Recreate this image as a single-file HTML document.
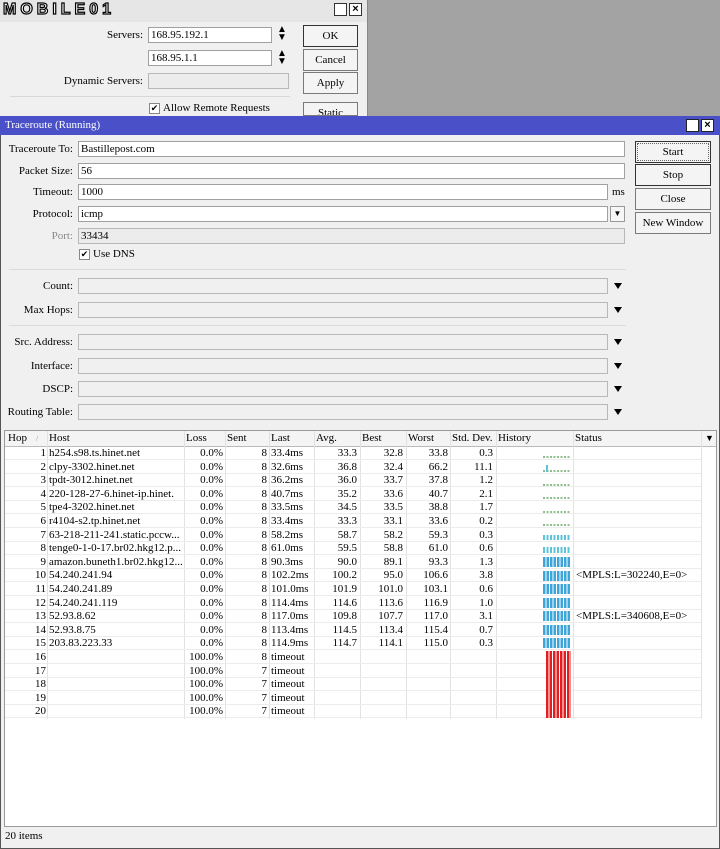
<!DOCTYPE html>
<html><head><meta charset="utf-8"><style>
*{margin:0;padding:0;box-sizing:border-box}
body{width:720px;height:849px;overflow:hidden;background:#a3a3a3;font-family:"Liberation Serif","Noto Serif CJK SC",serif;font-size:11px;color:#000;position:relative}
.a{position:absolute;white-space:nowrap}
.win1{left:0;top:0;width:368px;height:116px;background:#f0f0f0;border-right:1px solid #888}
.inp{position:absolute;height:16px;background:#fff;border:1px solid #a0a0a0;padding-left:2px;line-height:14px}
.dis{background:#ececec;border-color:#b8b8b8}
.btn{position:absolute;border:1px solid #7a7a7a;background:#f4f4f4;text-align:center;line-height:20px;height:22px}
.lbl{position:absolute;text-align:right;line-height:16px}
.tri{position:absolute;width:0;height:0;border-left:4px solid transparent;border-right:4px solid transparent;border-top:6px solid #000}
.row{position:absolute;left:5px;width:696px;height:14px;line-height:14px;border-bottom:1px solid #ececec}
.row span{position:absolute;top:0}
.h{left:0;width:41px;text-align:right}.o{left:44px}.l{left:179px;width:39px;text-align:right}.s{left:220px;width:42px;text-align:right}
.t{left:266px}.v{left:309px;width:43px;text-align:right}.b{left:355px;width:43px;text-align:right}.w{left:401px;width:42px;text-align:right}
.d{left:445px;width:43px;text-align:right}.st{left:571px}
.bar{position:absolute}
.g{background:repeating-linear-gradient(90deg,#8fbf8f 0 2px,transparent 2px 3.5px);height:2px}
.c{background:repeating-linear-gradient(90deg,#5ec3d6 0 2px,transparent 2px 3.5px)}
.bl{background:repeating-linear-gradient(90deg,#3ea5d8 0 2.5px,transparent 2.5px 3.5px)}
.r{background:repeating-linear-gradient(90deg,#e02020 0 2.5px,#fff 2.5px 3.5px)}
.vl{position:absolute;top:431px;height:288px;width:1px;background:#e2e2e2}
</style></head><body>
<div class="a win1">
 <div class="a" style="left:0;top:0;width:367px;height:22px;background:#e6e6e6"></div>
 <div class="a" style="left:3px;top:1px;font:bold 16px 'Liberation Sans',sans-serif;letter-spacing:4px;color:#fff;-webkit-text-stroke:1.2px #000">MOBILE01</div>
 <div class="a" style="left:334px;top:3px;width:13px;height:13px;border:1px solid #333;background:#fff"></div>
 <div class="a" style="left:349px;top:3px;width:13px;height:13px;border:1px solid #333;background:#fff;font:bold 11px/11px 'Liberation Sans',sans-serif;text-align:center">×</div>
 <div class="lbl" style="left:40px;width:103px;top:27px">Servers:</div>
 <div class="inp" style="left:148px;top:27px;width:124px">168.95.192.1</div>
 <div class="a" style="left:277px;top:26px;font-size:10px;line-height:8px">▲<br>▼</div>
 <div class="inp" style="left:148px;top:50px;width:124px">168.95.1.1</div>
 <div class="a" style="left:277px;top:50px;font-size:10px;line-height:8px">▲<br>▼</div>
 <div class="lbl" style="left:20px;width:123px;top:73px">Dynamic Servers:</div>
 <div class="inp dis" style="left:148px;top:73px;width:141px"></div>
 <div class="btn" style="left:303px;top:25px;width:55px;border-color:#333">OK</div>
 <div class="btn" style="left:303px;top:49px;width:55px">Cancel</div>
 <div class="btn" style="left:303px;top:72px;width:55px">Apply</div>
 <div class="a" style="left:10px;top:96px;width:280px;height:1px;background:#d8d8d8"></div>
 <div class="a" style="left:149px;top:103px;width:11px;height:11px;border:1px solid #888;background:#fff;font-size:9px;line-height:9px;text-align:center">✔</div>
 <div class="a" style="left:163px;top:102px">Allow Remote Requests</div>
 <div class="btn" style="left:303px;top:102px;width:55px;height:14px;overflow:hidden">Static</div>
</div>
<div class="a" style="left:0;top:116px;width:720px;height:733px;background:#f0f0f0;border:1px solid #555"></div>
<div class="a" style="left:0;top:116px;width:720px;height:19px;background:#4a50c8;color:#fff;padding-left:5px;line-height:19px">Traceroute (Running)</div>
<div class="a" style="left:686px;top:119px;width:13px;height:13px;border:1px solid #222;background:#fff"></div>
<div class="a" style="left:701px;top:119px;width:13px;height:13px;border:1px solid #222;background:#fff;font:bold 11px/11px 'Liberation Sans',sans-serif;text-align:center">×</div>

<div class="lbl" style="left:0;width:73px;top:141px">Traceroute To:</div>
<div class="inp" style="left:78px;top:141px;width:547px">Bastillepost.com</div>
<div class="lbl" style="left:0;width:73px;top:163px">Packet Size:</div>
<div class="inp" style="left:78px;top:163px;width:547px">56</div>
<div class="lbl" style="left:0;width:73px;top:184px">Timeout:</div>
<div class="inp" style="left:78px;top:184px;width:530px">1000</div>
<div class="a" style="left:612px;top:186px">ms</div>
<div class="lbl" style="left:0;width:73px;top:206px">Protocol:</div>
<div class="inp" style="left:78px;top:206px;width:530px">icmp</div>
<div class="a" style="left:610px;top:206px;width:15px;height:16px;border:1px solid #999;background:#f6f6f6;font-size:8px;text-align:center;line-height:14px">▼</div>
<div class="lbl" style="left:0;width:73px;top:228px;color:#888">Port:</div>
<div class="inp dis" style="left:78px;top:228px;width:547px">33434</div>
<div class="a" style="left:79px;top:249px;width:11px;height:11px;border:1px solid #888;background:#fff;font-size:9px;line-height:9px;text-align:center">✔</div>
<div class="a" style="left:93px;top:248px">Use DNS</div>
<div class="a" style="left:9px;top:269px;width:617px;height:1px;background:#dcdcdc"></div>

<div class="lbl" style="left:0;width:73px;top:278px">Count:</div>
<div class="inp dis" style="left:78px;top:278px;width:530px;background:#f0f0f0"></div><div class="tri" style="left:614px;top:283px"></div>
<div class="lbl" style="left:0;width:73px;top:302px">Max Hops:</div>
<div class="inp dis" style="left:78px;top:302px;width:530px;background:#f0f0f0"></div><div class="tri" style="left:614px;top:307px"></div>
<div class="a" style="left:9px;top:325px;width:617px;height:1px;background:#dcdcdc"></div>
<div class="lbl" style="left:0;width:73px;top:334px">Src. Address:</div>
<div class="inp dis" style="left:78px;top:334px;width:530px;background:#f0f0f0"></div><div class="tri" style="left:614px;top:339px"></div>
<div class="lbl" style="left:0;width:73px;top:358px">Interface:</div>
<div class="inp dis" style="left:78px;top:358px;width:530px;background:#f0f0f0"></div><div class="tri" style="left:614px;top:363px"></div>
<div class="lbl" style="left:0;width:73px;top:381px">DSCP:</div>
<div class="inp dis" style="left:78px;top:381px;width:530px;background:#f0f0f0"></div><div class="tri" style="left:614px;top:386px"></div>
<div class="lbl" style="left:0;width:73px;top:404px">Routing Table:</div>
<div class="inp dis" style="left:78px;top:404px;width:530px;background:#f0f0f0"></div><div class="tri" style="left:614px;top:409px"></div>

<div class="btn" style="left:635px;top:141px;width:76px;border-color:#333;outline:1px dotted #666;outline-offset:-3px">Start</div>
<div class="btn" style="left:635px;top:164px;width:76px;border-color:#333">Stop</div>
<div class="btn" style="left:635px;top:188px;width:76px">Close</div>
<div class="btn" style="left:635px;top:212px;width:76px">New Window</div>

<div class="a" style="left:4px;top:430px;width:713px;height:397px;background:#fff;border:1px solid #999"></div>
<div class="a" style="left:5px;top:431px;width:711px;height:16px;background:#f4f4f4;border-bottom:1px solid #bbb;line-height:15px">
<span class="a" style="left:3px">Hop</span><span class="a" style="left:31px;color:#999;font-size:8px">/</span>
<span class="a" style="left:44px">Host</span><span class="a" style="left:181px">Loss</span><span class="a" style="left:222px">Sent</span>
<span class="a" style="left:266px">Last</span><span class="a" style="left:311px">Avg.</span><span class="a" style="left:357px">Best</span>
<span class="a" style="left:403px">Worst</span><span class="a" style="left:447px">Std. Dev.</span><span class="a" style="left:493px">History</span>
<span class="a" style="left:570px">Status</span><span class="a" style="left:700px;font-size:9px">▼</span>
</div>
<div class="vl" style="left:47px"></div><div class="vl" style="left:184px"></div><div class="vl" style="left:225px"></div><div class="vl" style="left:269px"></div><div class="vl" style="left:314px"></div><div class="vl" style="left:360px"></div><div class="vl" style="left:406px"></div><div class="vl" style="left:450px"></div><div class="vl" style="left:496px"></div><div class="vl" style="left:573px"></div><div class="vl" style="left:701px"></div>

<div class="row" style="top:446px"><span class="h">1</span><span class="o">h254.s98.ts.hinet.net</span><span class="l">0.0%</span><span class="s">8</span><span class="t">33.4ms</span><span class="v">33.3</span><span class="b">32.8</span><span class="w">33.8</span><span class="d">0.3</span></div>
<div class="row" style="top:459.6px"><span class="h">2</span><span class="o">clpy-3302.hinet.net</span><span class="l">0.0%</span><span class="s">8</span><span class="t">32.6ms</span><span class="v">36.8</span><span class="b">32.4</span><span class="w">66.2</span><span class="d">11.1</span></div>
<div class="row" style="top:473.2px"><span class="h">3</span><span class="o">tpdt-3012.hinet.net</span><span class="l">0.0%</span><span class="s">8</span><span class="t">36.2ms</span><span class="v">36.0</span><span class="b">33.7</span><span class="w">37.8</span><span class="d">1.2</span></div>
<div class="row" style="top:486.8px"><span class="h">4</span><span class="o">220-128-27-6.hinet-ip.hinet.</span><span class="l">0.0%</span><span class="s">8</span><span class="t">40.7ms</span><span class="v">35.2</span><span class="b">33.6</span><span class="w">40.7</span><span class="d">2.1</span></div>
<div class="row" style="top:500.4px"><span class="h">5</span><span class="o">tpe4-3202.hinet.net</span><span class="l">0.0%</span><span class="s">8</span><span class="t">33.5ms</span><span class="v">34.5</span><span class="b">33.5</span><span class="w">38.8</span><span class="d">1.7</span></div>
<div class="row" style="top:514px"><span class="h">6</span><span class="o">r4104-s2.tp.hinet.net</span><span class="l">0.0%</span><span class="s">8</span><span class="t">33.4ms</span><span class="v">33.3</span><span class="b">33.1</span><span class="w">33.6</span><span class="d">0.2</span></div>
<div class="row" style="top:527.6px"><span class="h">7</span><span class="o">63-218-211-241.static.pccw...</span><span class="l">0.0%</span><span class="s">8</span><span class="t">58.2ms</span><span class="v">58.7</span><span class="b">58.2</span><span class="w">59.3</span><span class="d">0.3</span></div>
<div class="row" style="top:541.2px"><span class="h">8</span><span class="o">tenge0-1-0-17.br02.hkg12.p...</span><span class="l">0.0%</span><span class="s">8</span><span class="t">61.0ms</span><span class="v">59.5</span><span class="b">58.8</span><span class="w">61.0</span><span class="d">0.6</span></div>
<div class="row" style="top:554.8px"><span class="h">9</span><span class="o">amazon.buneth1.br02.hkg12...</span><span class="l">0.0%</span><span class="s">8</span><span class="t">90.3ms</span><span class="v">90.0</span><span class="b">89.1</span><span class="w">93.3</span><span class="d">1.3</span></div>
<div class="row" style="top:568.4px"><span class="h">10</span><span class="o">54.240.241.94</span><span class="l">0.0%</span><span class="s">8</span><span class="t">102.2ms</span><span class="v">100.2</span><span class="b">95.0</span><span class="w">106.6</span><span class="d">3.8</span><span class="st">&lt;MPLS:L=302240,E=0&gt;</span></div>
<div class="row" style="top:582px"><span class="h">11</span><span class="o">54.240.241.89</span><span class="l">0.0%</span><span class="s">8</span><span class="t">101.0ms</span><span class="v">101.9</span><span class="b">101.0</span><span class="w">103.1</span><span class="d">0.6</span></div>
<div class="row" style="top:595.6px"><span class="h">12</span><span class="o">54.240.241.119</span><span class="l">0.0%</span><span class="s">8</span><span class="t">114.4ms</span><span class="v">114.6</span><span class="b">113.6</span><span class="w">116.9</span><span class="d">1.0</span></div>
<div class="row" style="top:609.2px"><span class="h">13</span><span class="o">52.93.8.62</span><span class="l">0.0%</span><span class="s">8</span><span class="t">117.0ms</span><span class="v">109.8</span><span class="b">107.7</span><span class="w">117.0</span><span class="d">3.1</span><span class="st">&lt;MPLS:L=340608,E=0&gt;</span></div>
<div class="row" style="top:622.8px"><span class="h">14</span><span class="o">52.93.8.75</span><span class="l">0.0%</span><span class="s">8</span><span class="t">113.4ms</span><span class="v">114.5</span><span class="b">113.4</span><span class="w">115.4</span><span class="d">0.7</span></div>
<div class="row" style="top:636.4px"><span class="h">15</span><span class="o">203.83.223.33</span><span class="l">0.0%</span><span class="s">8</span><span class="t">114.9ms</span><span class="v">114.7</span><span class="b">114.1</span><span class="w">115.0</span><span class="d">0.3</span></div>
<div class="row" style="top:650px"><span class="h">16</span><span class="l">100.0%</span><span class="s">8</span><span class="t">timeout</span></div>
<div class="row" style="top:663.6px"><span class="h">17</span><span class="l">100.0%</span><span class="s">7</span><span class="t">timeout</span></div>
<div class="row" style="top:677.2px"><span class="h">18</span><span class="l">100.0%</span><span class="s">7</span><span class="t">timeout</span></div>
<div class="row" style="top:690.8px"><span class="h">19</span><span class="l">100.0%</span><span class="s">7</span><span class="t">timeout</span></div>
<div class="row" style="top:704.4px"><span class="h">20</span><span class="l">100.0%</span><span class="s">7</span><span class="t">timeout</span></div>

<div class="bar g" style="left:543px;top:456px;width:28px"></div>
<div class="bar g" style="left:543px;top:470px;width:28px"></div>
<div class="bar c" style="left:546px;top:465px;width:2px;height:7px"></div>
<div class="bar g" style="left:543px;top:484px;width:28px"></div>
<div class="bar g" style="left:543px;top:497px;width:28px"></div>
<div class="bar g" style="left:543px;top:511px;width:28px"></div>
<div class="bar g" style="left:543px;top:524px;width:28px"></div>
<div class="bar c" style="left:543px;top:535px;width:28px;height:5px"></div>
<div class="bar c" style="left:543px;top:547px;width:28px;height:6px"></div>
<div class="bar bl" style="left:543px;top:557px;width:28px;height:10px"></div>
<div class="bar bl" style="left:543px;top:571px;width:28px;height:10px"></div>
<div class="bar bl" style="left:543px;top:584px;width:28px;height:10px"></div>
<div class="bar bl" style="left:543px;top:598px;width:28px;height:10px"></div>
<div class="bar bl" style="left:543px;top:611px;width:28px;height:10px"></div>
<div class="bar bl" style="left:543px;top:625px;width:28px;height:10px"></div>
<div class="bar bl" style="left:543px;top:638px;width:28px;height:10px"></div>
<div class="bar r" style="left:546px;top:651px;width:25px;height:67px"></div>

<div class="a" style="left:5px;top:830px">20 items</div>
</body></html>
